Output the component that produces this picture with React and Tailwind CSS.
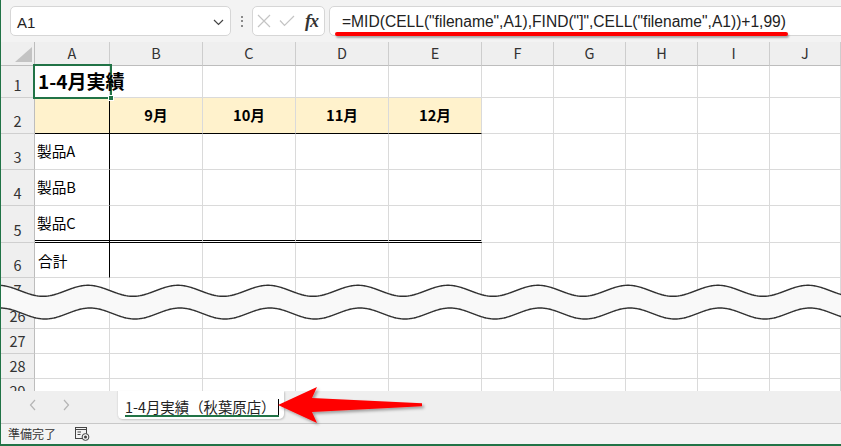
import React from "react";

const GRID_W = ["w-[75px]", "w-[93px]", "w-[93px]", "w-[93px]", "w-[93px]", "w-[72px]", "w-[72px]", "w-[72px]", "w-[72px]", "flex-1"];
const LETTERS = ["A", "B", "C", "D", "E", "F", "G", "H", "I", "J"];

function RowHead({ label }) {
  return (
    <div className="w-[34px] shrink-0 h-full bg-[#efefef] border-r border-b border-r-[#bdbdbd] border-b-[#cfcfcf] flex items-end justify-center pb-[5px] text-[14.5px] leading-none text-[#333]">
      {label}
    </div>
  );
}

function Cell({ i, r = "border-r-[#dadada]", b = "border-b border-b-[#dadada]", bg = "", cls = "", children }) {
  return (
    <div className={`${GRID_W[i]} shrink-0 h-full border-r ${r} ${b} ${bg} ${cls}`}>{children}</div>
  );
}

function PlainRow({ h, label }) {
  return (
    <div className={`flex shrink-0 ${h}`}>
      <RowHead label={label} />
      {GRID_W.map((_, i) => (
        <Cell key={i} i={i} />
      ))}
    </div>
  );
}

function buildWave() {
  const top = [];
  const bot = [];
  for (let x = -4; x <= 846; x += 1) {
    const yT = 290.8 - 5.5 * Math.cos((2 * Math.PI * (x + 3)) / 90);
    const yB = 313.5 - 5.5 * Math.cos((2 * Math.PI * (x + 1)) / 90);
    top.push([x, yT]);
    bot.push([x, yB]);
  }
  const t = top.map((p, k) => `${k ? "L" : "M"}${p[0]} ${p[1].toFixed(2)}`).join(" ");
  const b = bot.map((p, k) => `${k ? "L" : "M"}${p[0]} ${p[1].toFixed(2)}`).join(" ");
  const fill =
    t +
    " " +
    bot
      .slice()
      .reverse()
      .map((p) => `L${p[0]} ${p[1].toFixed(2)}`)
      .join(" ") +
    " Z";
  return { t, b, fill };
}

export default function App() {
  const wave = buildWave();
  const months = ["9月", "10月", "11月", "12月"];
  return (
    <div className="relative w-[841px] h-[446px] overflow-hidden bg-white flex flex-col border-l border-l-[#217346] border-b-2 border-b-[#217346] font-['Noto_Sans_CJK_JP',sans-serif]">
      {/* Formula bar */}
      <div className="h-[42px] shrink-0 bg-[#f3f3f3] flex items-center pl-[9px]">
        <div className="w-[221px] h-[30px] shrink-0 bg-white border border-[#d6d6d6] rounded-[5px] flex items-center justify-between pl-[6px] pr-[6px]">
          <span className="font-['Liberation_Sans',sans-serif] text-[15px] leading-none text-[#222] pt-[3px]">A1</span>
          <svg width="11" height="7" viewBox="0 0 11 7" className="mt-[2px]">
            <path d="M1 1 L5.5 5.5 L10 1" fill="none" stroke="#444" strokeWidth="1.2" />
          </svg>
        </div>
        <div className="w-[21px] shrink-0 flex flex-col items-center gap-[2.5px]">
          <div className="w-[2px] h-[2px] bg-[#8a8a8a]" />
          <div className="w-[2px] h-[2px] bg-[#8a8a8a]" />
          <div className="w-[2px] h-[2px] bg-[#8a8a8a]" />
        </div>
        <div className="w-[73px] h-[30px] shrink-0 bg-white border border-[#d6d6d6] rounded-[5px] flex items-center pl-[4px]">
          <svg width="14" height="14" viewBox="0 0 14 14">
            <path d="M1 1 L13 13 M13 1 L1 13" stroke="#c4c4c4" strokeWidth="1.2" fill="none" />
          </svg>
          <svg width="16" height="12" viewBox="0 0 16 12" className="ml-[8px]">
            <path d="M1 5.5 L5.5 10.5 L15 1" stroke="#c4c4c4" strokeWidth="1.2" fill="none" />
          </svg>
          <span className="ml-[10px] font-['Liberation_Serif',serif] italic font-bold text-[18px] leading-none text-[#333] tracking-[-1px]">fx</span>
        </div>
        <div className="ml-[4px] flex-1 -mr-[8px] h-[30px] bg-white border border-[#d6d6d6] rounded-[5px] flex items-center pl-[12px]">
          <span className="font-['Liberation_Sans',sans-serif] text-[15.6px] leading-none text-[#222] pt-[2px] whitespace-nowrap">
            =MID(CELL("filename",A1),FIND("]",CELL("filename",A1))+1,99)
          </span>
        </div>
      </div>

      {/* Column headers */}
      <div className="flex h-[24px] shrink-0 bg-[#efefef]">
        <div className="w-[34px] shrink-0 h-full border-r border-b border-r-[#bdbdbd] border-b-[#bdbdbd] relative">
          <svg width="18" height="16" viewBox="0 0 18 16" className="absolute left-[14px] top-[5px]">
            <polygon points="17,0 17,15 0,15" fill="#c3c3c3" />
          </svg>
        </div>
        {LETTERS.map((l, i) => (
          <div
            key={l}
            className={`${GRID_W[i]} shrink-0 h-full border-r border-b border-r-[#cdcdcd] border-b-[#bdbdbd] flex items-center justify-center text-[14.5px] leading-none text-[#333]`}
          >
            {l}
          </div>
        ))}
      </div>

      {/* Row 1 */}
      <div className="flex shrink-0 h-[32px]">
        <RowHead label="1" />
        <Cell i={0} cls="relative">
          <span className="absolute left-[3px] top-[5px] whitespace-nowrap text-[19px] font-bold leading-none text-black z-10">
            1-4月実績
          </span>
        </Cell>
        {GRID_W.slice(1).map((_, k) => (
          <Cell key={k} i={k + 1} />
        ))}
      </div>

      {/* Row 2 */}
      <div className="flex shrink-0 h-[36px]">
        <RowHead label="2" />
        <Cell i={0} r="border-r-black" b="border-b border-b-black" bg="bg-[#fff2cc]" />
        {months.map((m, k) => (
          <Cell key={m} i={k + 1} b="border-b border-b-black" bg="bg-[#fff2cc]" cls="flex items-center justify-center text-[14.67px] font-bold leading-none">
            {m}
          </Cell>
        ))}
        {GRID_W.slice(5).map((_, k) => (
          <Cell key={k} i={k + 5} />
        ))}
      </div>

      {/* Rows 3-5 */}
      {[
        ["3", "製品A", "h-[36px]"],
        ["4", "製品B", "h-[36px]"],
      ].map(([n, t, h]) => (
        <div key={n} className={`flex shrink-0 ${h}`}>
          <RowHead label={n} />
          <Cell i={0} r="border-r-black" cls="flex items-center pl-[2px] text-[14.67px] leading-none">
            {t}
          </Cell>
          {GRID_W.slice(1).map((_, k) => (
            <Cell key={k} i={k + 1} />
          ))}
        </div>
      ))}
      <div className="flex shrink-0 h-[37px]">
        <RowHead label="5" />
        <Cell i={0} r="border-r-black" b="border-b-[3px] border-double border-b-black" cls="flex items-center pl-[2px] text-[14.67px] leading-none">
          製品C
        </Cell>
        {[1, 2, 3, 4].map((i) => (
          <Cell key={i} i={i} b="border-b-[3px] border-double border-b-black" />
        ))}
        {GRID_W.slice(5).map((_, k) => (
          <Cell key={k} i={k + 5} />
        ))}
      </div>

      {/* Row 6 */}
      <div className="flex shrink-0 h-[35px]">
        <RowHead label="6" />
        <Cell i={0} r="border-r-black" cls="flex items-center pl-[3px] pt-[2px] text-[14.67px] leading-none">
          合計
        </Cell>
        {GRID_W.slice(1).map((_, k) => (
          <Cell key={k} i={k + 1} />
        ))}
      </div>

      <PlainRow h="h-[25px]" label="7" />
      <PlainRow h="h-[26px]" label="26" />
      <PlainRow h="h-[25px]" label="27" />
      <PlainRow h="h-[25px]" label="28" />
      <div className="h-[12px] shrink-0 overflow-hidden">
        <div className="flex h-[25px]">
          <RowHead label="29" />
          {GRID_W.map((_, i) => (
            <Cell key={i} i={i} />
          ))}
        </div>
      </div>

      {/* Sheet tab bar */}
      <div className="h-[32px] shrink-0 bg-[#efefef] flex items-start">
        <div className="w-[116px] h-full shrink-0 flex items-center pb-[4px]">
          <svg width="8" height="12" viewBox="0 0 8 12" className="ml-[28px]">
            <path d="M6 1 L1.5 6 L6 11" fill="none" stroke="#b4b4b4" strokeWidth="1.2" />
          </svg>
          <svg width="8" height="12" viewBox="0 0 8 12" className="ml-[25px]">
            <path d="M2 1 L6.5 6 L2 11" fill="none" stroke="#b4b4b4" strokeWidth="1.2" />
          </svg>
        </div>
        <div className="w-[167px] h-[28px] shrink-0 bg-white rounded-b-[5px] border-l border-[#e2e2e2] shadow-[1px_1px_2px_rgba(0,0,0,0.18)] flex items-start pl-[7px] pt-[8px]">
          <div className="flex items-end border-b-2 border-b-[#217346] pb-[1px]">
            <span className="text-[14.4px] leading-none text-[#222] whitespace-nowrap">1-4月実績（秋葉原店）</span>
            <span className="w-px h-[16px] bg-black ml-[3px] mb-[-1px]" />
          </div>
        </div>
      </div>

      {/* Status bar */}
      <div className="h-[21px] shrink-0 bg-[#f3f3f3] border-t border-t-[#c8c8c8] flex items-center pl-[7px]">
        <span className="text-[12px] leading-none text-[#333]">準備完了</span>
        <svg width="15" height="14" viewBox="0 0 15 14" className="ml-[19px]">
          <rect x="0.5" y="0.5" width="11" height="11" fill="none" stroke="#444" strokeWidth="1" />
          <line x1="0.5" y1="2.5" x2="11.5" y2="2.5" stroke="#444" strokeWidth="1" />
          <line x1="2.5" y1="5" x2="6" y2="5" stroke="#444" strokeWidth="1" />
          <line x1="2.5" y1="7.5" x2="5.5" y2="7.5" stroke="#444" strokeWidth="1" />
          <circle cx="10.5" cy="10" r="3.4" fill="#f3f3f3" stroke="#444" strokeWidth="1" />
          <circle cx="10.5" cy="10" r="1.5" fill="#444" />
        </svg>
      </div>

      {/* Overlays */}
      <div className="absolute left-[32px] top-[64px] w-[79px] h-[35px] border-2 border-[#217346] pointer-events-none" />
      <div className="absolute left-[107px] top-[95px] w-[6px] h-[6px] bg-[#217346] border border-white pointer-events-none" />

      <div className="absolute left-[334px] top-[32px] w-[453px] h-[4px] bg-[#ff0000] rounded-full shadow-[1px_2px_2px_rgba(0,0,0,0.3)]" />

      <svg className="absolute left-[-1px] top-[270px] pointer-events-none" width="843" height="60" viewBox="-1 270 843 60">
        <path d={wave.fill} fill="#f9f9f9" />
        <path d={wave.t} fill="none" stroke="#303030" strokeWidth="1.4" />
        <path d={wave.b} fill="none" stroke="#303030" strokeWidth="1.4" />
      </svg>

      <svg className="absolute left-[-1px] top-[380px] pointer-events-none" width="440" height="50" viewBox="-1 380 440 50" style={{ overflow: "visible" }}>
        <defs>
          <filter id="sh" x="-10%" y="-30%" width="130%" height="170%">
            <feDropShadow dx="2" dy="2" stdDeviation="1.5" floodColor="#000" floodOpacity="0.35" />
          </filter>
        </defs>
        <polygon points="277,405 316,387 311,398 421,403.2 421,406.2 311,412 316,423" fill="#ff0000" filter="url(#sh)" />
      </svg>
    </div>
  );
}
